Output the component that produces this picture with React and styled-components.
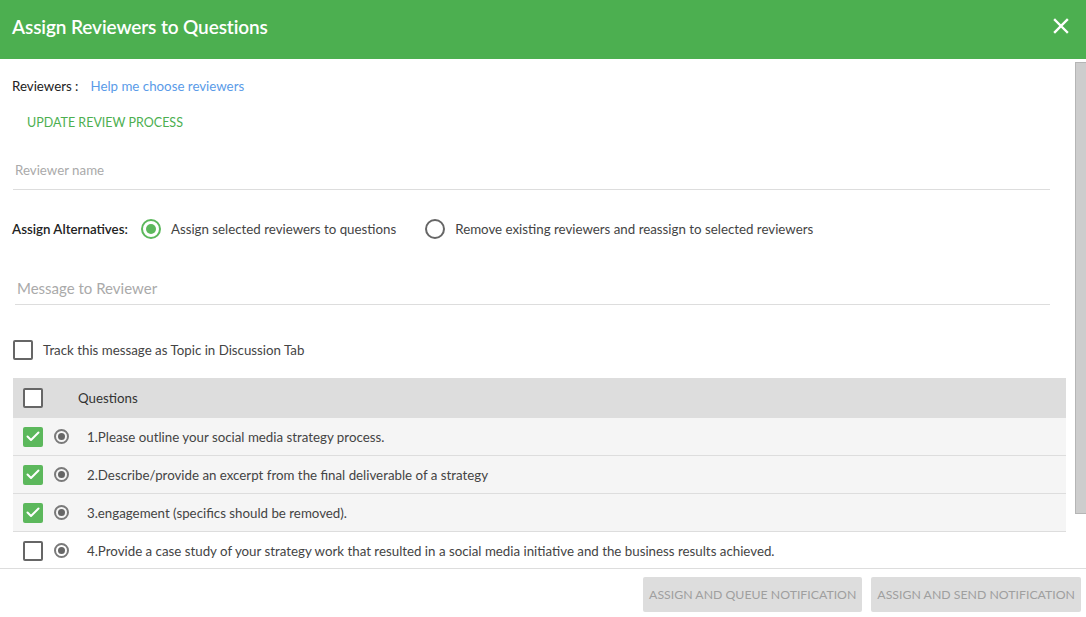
import React from "react";
import styled, { createGlobalStyle } from "styled-components";

const Global = createGlobalStyle`
  html, body { margin: 0; padding: 0; background: #fff; }
  body { font-family: Lato, "Open Sans", sans-serif; color: #444; }
  * { box-sizing: border-box; }
`;

const Dialog = styled.div`
  width: 1086px;
  height: 617px;
  display: flex;
  flex-direction: column;
  overflow: hidden;
`;

const Header = styled.header`
  height: 59px;
  flex: none;
  background: #4caf50;
  display: flex;
  align-items: center;
  justify-content: space-between;
  padding: 0 16px 7px 12px;
`;

const Title = styled.h1`
  margin: 0;
  font-size: 19px;
  font-weight: 600;
  color: #fff;
  letter-spacing: -0.1px;
`;

const CloseButton = styled.button`
  border: 0;
  background: none;
  padding: 0;
  width: 18px;
  height: 18px;
  display: flex;
  align-items: center;
  justify-content: center;
  cursor: pointer;
`;

const Body = styled.div`
  flex: 1;
  min-height: 0;
  display: flex;
  overflow: hidden;
`;

const Content = styled.div`
  flex: 1;
  min-height: 0;
  overflow: hidden;
  padding: 17px 9px 0 12px;
  display: flex;
  flex-direction: column;
  & > * { flex-shrink: 0; }
`;

const ScrollTrack = styled.div`
  width: 11px;
  flex: none;
  padding-top: 3px;
`;

const ScrollThumb = styled.div`
  height: 452px;
  background: #cdcdcd;
  border: 1px solid #b5b5b5;
  border-right: 0;
`;

const InlineRow = styled.div`
  height: 20px;
  display: flex;
  align-items: center;
  font-size: 13.3px;
  margin-top: ${(p) => p.$mt || 0}px;
`;

const Label = styled.span`
  color: #222;
  font-weight: ${(p) => (p.$strong ? 600 : 400)};
  margin-right: ${(p) => p.$mr || 0}px;
`;

const Link = styled.a`
  color: #5a9be8;
  text-decoration: none;
  cursor: pointer;
`;

const TextButton = styled.button`
  align-self: flex-start;
  height: 36px;
  margin-top: 8px;
  padding: 0 15px;
  border: 0;
  background: none;
  color: #4caf50;
  font-family: inherit;
  font-size: 12.5px;
  text-transform: uppercase;
  cursor: pointer;
`;

const Field = styled.input`
  display: block;
  margin: ${(p) => p.$mt}px 16px 0 ${(p) => p.$ml}px;
  height: ${(p) => p.$h}px;
  padding: ${(p) => p.$pt}px 0 0 2px;
  border: 0;
  border-bottom: 1px solid #ddd;
  outline: none;
  font-family: inherit;
  font-size: ${(p) => p.$fs}px;
  color: #444;
  background: transparent;
  &::placeholder { color: #aaa; }
`;

const RadioOption = styled.label`
  display: flex;
  align-items: center;
  gap: 10px;
  margin-right: 29px;
  color: #444;
  cursor: pointer;
`;

const RadioCircle = styled.span`
  width: 20px;
  height: 20px;
  border-radius: 50%;
  border: 2px solid ${(p) => (p.$on ? "#5cb85c" : "#666")};
  display: flex;
  align-items: center;
  justify-content: center;
  &::after {
    content: "";
    width: 10px;
    height: 10px;
    border-radius: 50%;
    background: ${(p) => (p.$on ? "#5cb85c" : "transparent")};
  }
`;

const Box = styled.span`
  width: 20px;
  height: 20px;
  flex: none;
  border-radius: 2px;
  border: ${(p) => (p.$on ? "0" : "2px solid #666")};
  background: ${(p) => (p.$on ? "#5cb85c" : "#fff")};
  display: flex;
  align-items: center;
  justify-content: center;
`;

const CheckRow = styled.label`
  height: 20px;
  display: flex;
  align-items: center;
  gap: 10px;
  margin-top: 35px;
  margin-left: 1px;
  font-size: 13.3px;
  color: #444;
`;

const Table = styled.div`
  margin: 18px 0 0 1px;
  display: flex;
  flex-direction: column;
`;

const HeadRow = styled.div`
  height: 40px;
  background: #ddd;
  display: flex;
  align-items: center;
  padding-left: 10px;
  font-size: 13.3px;
  color: #333;
  gap: 35px;
`;

const QRow = styled.div`
  height: 38px;
  flex: none;
  background: ${(p) => (p.$on ? "#f5f5f5" : "#fff")};
  border-bottom: 1px solid #ddd;
  display: flex;
  align-items: center;
  padding-left: 10px;
  font-size: 13.3px;
  color: #444;
`;

const MiniRadio = styled.span`
  width: 15px;
  height: 15px;
  flex: none;
  margin: 0 18px 0 11px;
  border-radius: 50%;
  border: 2px solid #7a7a7a;
  display: flex;
  align-items: center;
  justify-content: center;
  &::after {
    content: "";
    width: 7px;
    height: 7px;
    border-radius: 50%;
    background: #666;
  }
`;

const Footer = styled.footer`
  height: 49px;
  flex: none;
  border-top: 1px solid #ddd;
  display: flex;
  justify-content: flex-end;
  align-items: flex-start;
  gap: 9px;
  padding: 8px 5px 0 0;
`;

const ActionButton = styled.button`
  height: 35px;
  padding: 0 6px;
  border: 0;
  border-radius: 2px;
  background: #ddd;
  color: #9f9f9f;
  font-family: inherit;
  font-size: 12.3px;
  text-transform: uppercase;
`;

const Check = () => (
  <svg width="14" height="11" viewBox="0 0 14 11" fill="none">
    <path d="M1.5 5.5 L5 9 L12.5 1.5" stroke="#fff" strokeWidth="2" strokeLinecap="round" strokeLinejoin="round" />
  </svg>
);

const questions = [
  { text: "1.Please outline your social media strategy process.", on: true },
  { text: "2.Describe/provide an excerpt from the final deliverable of a strategy", on: true },
  { text: "3.engagement (specifics should be removed).", on: true },
  {
    text: "4.Provide a case study of your strategy work that resulted in a social media initiative and the business results achieved.",
    on: false,
  },
];

export default function App() {
  return (
    <>
      <Global />
      <Dialog>
        <Header>
          <Title>Assign Reviewers to Questions</Title>
          <CloseButton aria-label="close">
            <svg width="16" height="16" viewBox="0 0 16 16">
              <path d="M2 2 L14 14 M14 2 L2 14" stroke="#fff" strokeWidth="2.4" strokeLinecap="square" />
            </svg>
          </CloseButton>
        </Header>
        <Body>
          <Content>
            <InlineRow>
              <Label $mr={12}>Reviewers :</Label>
              <Link>Help me choose reviewers</Link>
            </InlineRow>
            <TextButton>Update Review Process</TextButton>
            <Field $mt={10} $ml={1} $h={40} $pt={0} $fs={13.3} placeholder="Reviewer name" />
            <InlineRow $mt={29}>
              <Label $strong $mr={13}>Assign Alternatives:</Label>
              <RadioOption>
                <RadioCircle $on />
                Assign selected reviewers to questions
              </RadioOption>
              <RadioOption>
                <RadioCircle />
                Remove existing reviewers and reassign to selected reviewers
              </RadioOption>
            </InlineRow>
            <Field $mt={31} $ml={3} $h={35} $pt={2} $fs={15} placeholder="Message to Reviewer" />
            <CheckRow>
              <Box />
              Track this message as Topic in Discussion Tab
            </CheckRow>
            <Table>
              <HeadRow>
                <Box />
                Questions
              </HeadRow>
              {questions.map((q) => (
                <QRow key={q.text} $on={q.on}>
                  <Box $on={q.on}>{q.on && <Check />}</Box>
                  <MiniRadio />
                  {q.text}
                </QRow>
              ))}
            </Table>
          </Content>
          <ScrollTrack>
            <ScrollThumb />
          </ScrollTrack>
        </Body>
        <Footer>
          <ActionButton disabled>Assign and Queue Notification</ActionButton>
          <ActionButton disabled>Assign and Send Notification</ActionButton>
        </Footer>
      </Dialog>
    </>
  );
}
